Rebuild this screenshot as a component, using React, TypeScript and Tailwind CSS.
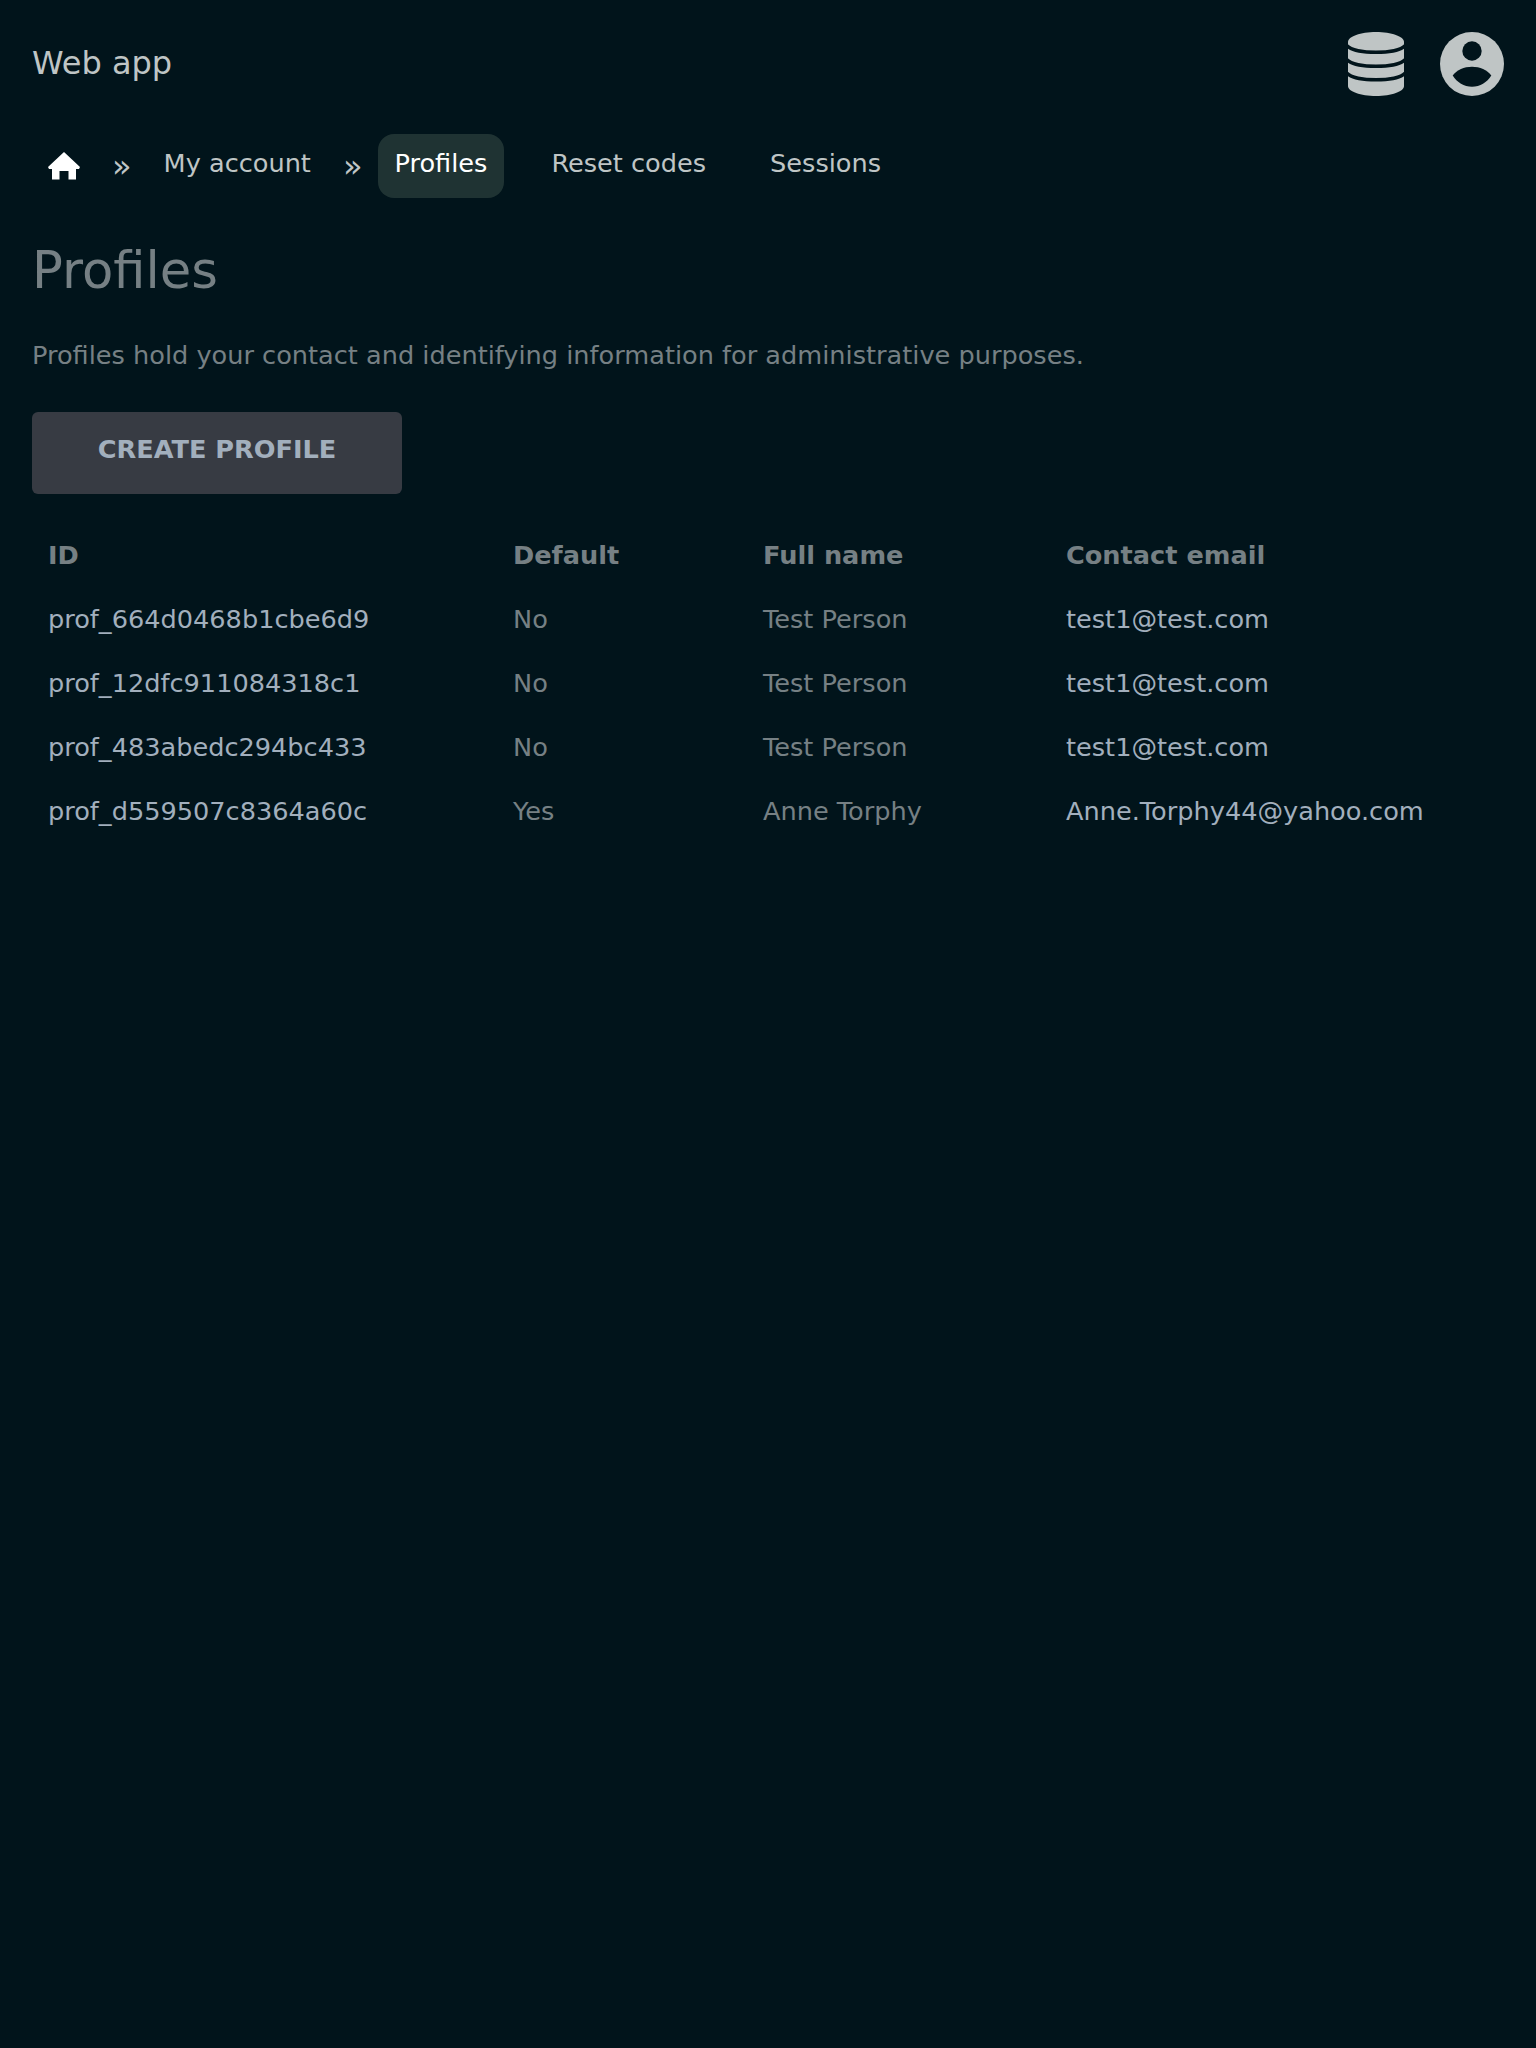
const rows = [
  { id: 'prof_664d0468b1cbe6d9', isDefault: 'No', name: 'Test Person', email: 'test1@test.com' },
  { id: 'prof_12dfc911084318c1', isDefault: 'No', name: 'Test Person', email: 'test1@test.com' },
  { id: 'prof_483abedc294bc433', isDefault: 'No', name: 'Test Person', email: 'test1@test.com' },
  { id: 'prof_d559507c8364a60c', isDefault: 'Yes', name: 'Anne Torphy', email: 'Anne.Torphy44@yahoo.com' },
];

function DatabaseIcon() {
  return (
    <svg width="56" height="64" viewBox="0 0 56 64">
      <path d="M0 10C0 4.5 12.5 0 28 0S56 4.5 56 10V54C56 59.5 43.5 64 28 64S0 59.5 0 54Z" fill="#bfc5c5" />
      <path d="M-1 13.5C6 22.5 50 22.5 57 13.5M-1 27.5C6 36.5 50 36.5 57 27.5M-1 41C6 50 50 50 57 41" fill="none" stroke="#01141b" strokeWidth="3.4" />
    </svg>
  );
}

function UserIcon() {
  return (
    <svg width="64" height="64" viewBox="0 0 64 64">
      <circle cx="32" cy="32" r="32" fill="#bfc5c5" />
      <circle cx="32" cy="19" r="9.7" fill="#01141b" />
      <path d="M12.7 43.5C17 38 24 34.7 32 34.7S47 38 51.3 43.5C47 50.5 40 54.7 32 54.7S17 50.5 12.7 43.5Z" fill="#01141b" />
    </svg>
  );
}

function HomeIcon() {
  return (
    <svg width="32" height="28" viewBox="0 0 32 28" fill="#ffffff">
      <path d="M16 0L32 15L31 17H28V27.5H20.5V19H11.5V27.5H4V17H1L0 15Z" />
    </svg>
  );
}

export default function App() {
  return (
    <div className="min-h-[2048px] bg-[#01141b] font-['DejaVu_Sans',sans-serif] text-[#bfc5c5]">
      <header className="flex h-[134px] items-start justify-between px-8 pt-8">
        <span className="text-[32px] leading-[62px]">Web app</span>
        <div className="flex items-center gap-9">
          <DatabaseIcon />
          <UserIcon />
        </div>
      </header>

      <nav className="flex h-[64px] items-start pl-8 text-[25.6px] leading-[58px]">
        <div className="flex h-[64px] w-[64px] items-center justify-center"><HomeIcon /></div>
        <span className="mx-4 pt-[3px] text-[32px]">»</span>
        <span className="px-4">My account</span>
        <span className="mx-4 pt-[3px] text-[32px]">»</span>
        <span className="h-[64px] rounded-2xl bg-[#1f3333] pl-4 pr-[17px] text-white">Profiles</span>
        <span className="ml-[31px] px-4">Reset codes</span>
        <span className="ml-8 px-4">Sessions</span>
      </nav>

      <main className="px-8">
        <h1 className="mt-[36px] text-[51.2px] leading-[72px] text-[#768084]">Profiles</h1>
        <p className="mt-[30px] text-[25.6px] leading-[38px] text-[#768084]">Profiles hold your contact and identifying information for administrative purposes.</p>
        <button className="mt-[38px] block h-[82px] w-[370px] rounded-md bg-[#373b43] pb-[8px] text-[25.6px] font-bold text-[#a2afbd]">CREATE PROFILE</button>
        <table className="mt-[29px] border-collapse text-left text-[25.6px] leading-[64px]">
          <thead>
            <tr className="font-bold text-[#768084]">
              <th className="w-[481px] pl-4">ID</th>
              <th className="w-[250px]">Default</th>
              <th className="w-[303px]">Full name</th>
              <th>Contact email</th>
            </tr>
          </thead>
          <tbody>
            {rows.map((row) => (
              <tr key={row.id}>
                <td className="pl-4 text-[#a2afbd]">{row.id}</td>
                <td className="text-[#768084]">{row.isDefault}</td>
                <td className="text-[#768084]">{row.name}</td>
                <td className="text-[#a2afbd]">{row.email}</td>
              </tr>
            ))}
          </tbody>
        </table>
      </main>
    </div>
  );
}
